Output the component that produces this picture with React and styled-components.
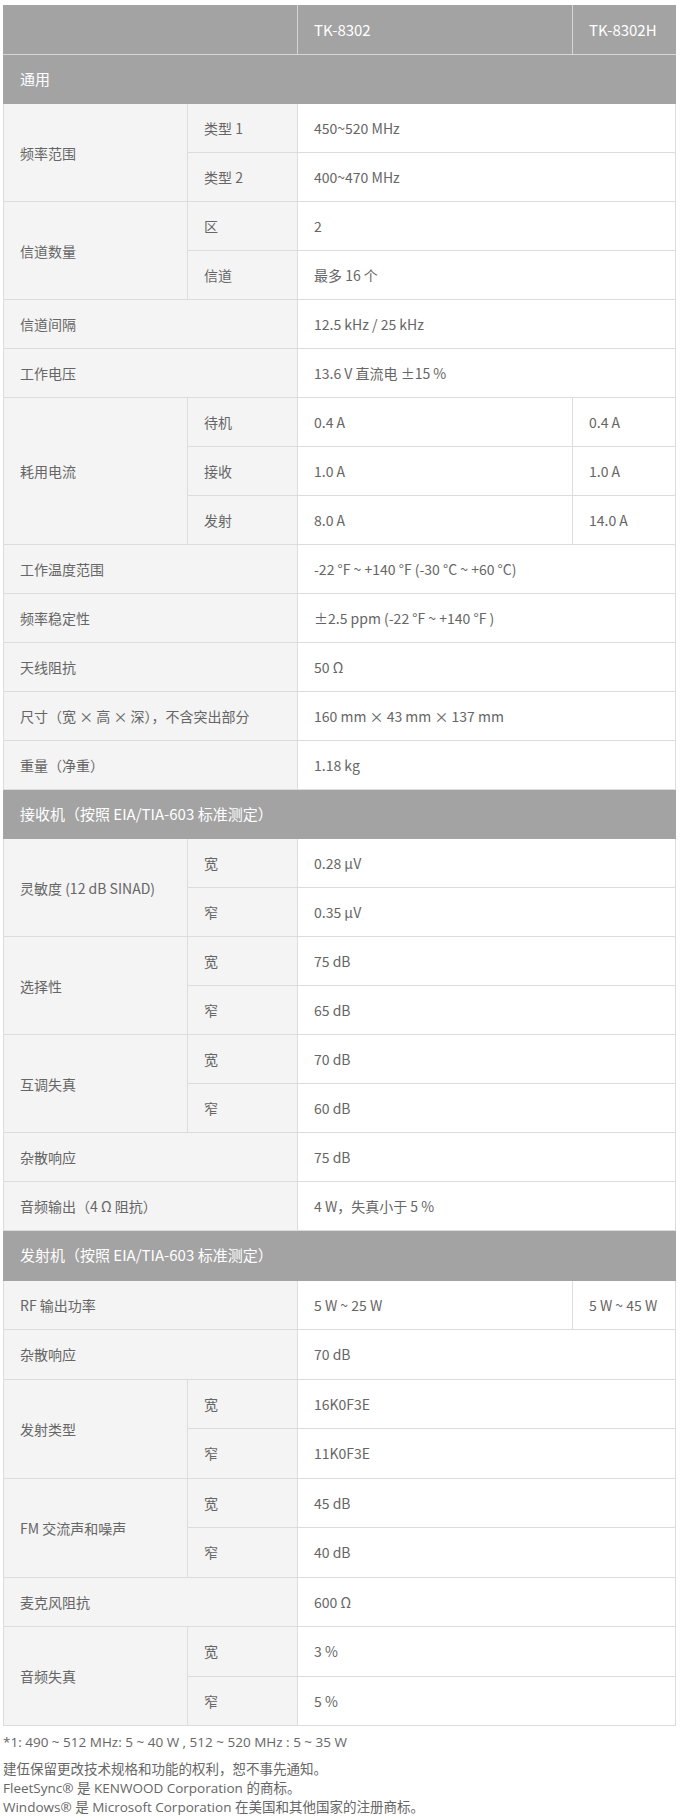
import React from 'react';
import styled, { createGlobalStyle } from 'styled-components';

const GlobalStyle = createGlobalStyle`
    body {
        margin: 0;
        background: #fff;
        font-family: "Noto Sans CJK SC", "Noto Sans", sans-serif;
        color: #666;
    }
`;

const Page = styled.div`
    padding: 5px 0 0 3px;
    width: 672px;
`;

const SpecTable = styled.table`
    width: 672px;
    table-layout: fixed;
    border-collapse: collapse;
    font-size: 14px;
`;

const Cell = styled.td`
    height: ${p => (p.$tall ? '48.5px' : '48px')};
    padding: 0 16px;
    border: 1px solid #dcdcdc;
    vertical-align: middle;
    white-space: nowrap;
    line-height: 20px;
`;

const HeadCell = styled(Cell)`
    background: #a3a3a3;
    color: #fff;
    font-size: 15px;
    font-weight: 400;
    text-align: left;
    border-color: #d6d6d6;
    border-top-color: #a3a3a3;
    border-left-color: ${p => (p.$first ? '#a3a3a3' : '#d6d6d6')};
    border-right-color: ${p => (p.$last ? '#a3a3a3' : '#d6d6d6')};
    border-bottom-color: ${p => (p.$section ? '#a3a3a3' : '#d6d6d6')};
`;

const LabelCell = styled(Cell)`
    background: #f4f4f4;
`;

const ValueCell = styled(Cell)`
    background: #fff;
`;

const Notes = styled.div`
    font-family: "Open Sans", "Noto Sans CJK SC", sans-serif;
    font-size: 13.5px;
    color: #666;
    line-height: 19px;
`;

const Footnote = styled.p`
    margin: 7px 0 8px;
`;

const Legal = styled.p`
    margin: 0;
`;

// rows: [label, subs] where subs = [[sub, v1, v2?]] ; v2 absent = value spans both model columns
const general = [
    ['频率范围', [['类型 1', '450~520 MHz'], ['类型 2', '400~470 MHz']]],
    ['信道数量', [['区', '2'], ['信道', '最多 16 个']]],
    ['信道间隔', [[null, '12.5 kHz / 25 kHz']]],
    ['工作电压', [[null, '13.6 V 直流电 ±15 %']]],
    ['耗用电流', [['待机', '0.4 A', '0.4 A'], ['接收', '1.0 A', '1.0 A'], ['发射', '8.0 A', '14.0 A']]],
    ['工作温度范围', [[null, '-22 °F ~ +140 °F (-30 °C ~ +60 °C)']]],
    ['频率稳定性', [[null, '±2.5 ppm (-22 °F ~ +140 °F )']]],
    ['天线阻抗', [[null, '50 Ω']]],
    ['尺寸（宽 × 高 × 深），不含突出部分', [[null, '160 mm × 43 mm × 137 mm']]],
    ['重量（净重）', [[null, '1.18 kg']]],
];

const receiver = [
    ['灵敏度 (12 dB SINAD)', [['宽', '0.28 µV'], ['窄', '0.35 µV']]],
    ['选择性', [['宽', '75 dB'], ['窄', '65 dB']]],
    ['互调失真', [['宽', '70 dB'], ['窄', '60 dB']]],
    ['杂散响应', [[null, '75 dB']]],
    ['音频输出（4 Ω 阻抗）', [[null, '4 W，失真小于 5 %']]],
];

const transmitter = [
    ['RF 输出功率', [[null, '5 W ~ 25 W', '5 W ~ 45 W']]],
    ['杂散响应', [[null, '70 dB']]],
    ['发射类型', [['宽', '16K0F3E'], ['窄', '11K0F3E']]],
    ['FM 交流声和噪声', [['宽', '45 dB'], ['窄', '40 dB']]],
    ['麦克风阻抗', [[null, '600 Ω']]],
    ['音频失真', [['宽', '3 %'], ['窄', '5 %']]],
];

function SpecRows({ rows, tall }) {
    return rows.flatMap(([label, subs]) =>
        subs.map(([sub, v1, v2], i) => (
            <tr key={label + i}>
                {i === 0 && (
                    <LabelCell rowSpan={subs.length} colSpan={sub ? 1 : 2}>
                        {label}
                    </LabelCell>
                )}
                {sub && <LabelCell>{sub}</LabelCell>}
                <ValueCell $tall={tall} colSpan={v2 ? 1 : 2}>{v1}</ValueCell>
                {v2 && <ValueCell $tall={tall}>{v2}</ValueCell>}
            </tr>
        ))
    );
}

function Section({ title, tall }) {
    return (
        <tr>
            <HeadCell colSpan={4} $first $last $section $tall={tall}>
                {title}
            </HeadCell>
        </tr>
    );
}

export default function App() {
    return (
        <Page>
            <GlobalStyle />
            <SpecTable>
                <colgroup>
                    <col style={{ width: 184 }} />
                    <col style={{ width: 110 }} />
                    <col style={{ width: 275 }} />
                    <col style={{ width: 103 }} />
                </colgroup>
                <tbody>
                    <tr>
                        <HeadCell as="th" colSpan={2} $first />
                        <HeadCell as="th">TK-8302</HeadCell>
                        <HeadCell as="th" $last>TK-8302H</HeadCell>
                    </tr>
                    <Section title="通用" />
                    <SpecRows rows={general} />
                    <Section title="接收机（按照 EIA/TIA-603 标准测定）" />
                    <SpecRows rows={receiver} />
                    <Section title="发射机（按照 EIA/TIA-603 标准测定）" tall />
                    <SpecRows rows={transmitter} tall />
                </tbody>
            </SpecTable>
            <Notes>
                <Footnote>*1: 490 ~ 512 MHz: 5 ~ 40 W , 512 ~ 520 MHz :  5 ~ 35 W</Footnote>
                <Legal>建伍保留更改技术规格和功能的权利，恕不事先通知。</Legal>
                <Legal>FleetSync® 是 KENWOOD Corporation 的商标。</Legal>
                <Legal>Windows® 是 Microsoft Corporation 在美国和其他国家的注册商标。</Legal>
            </Notes>
        </Page>
    );
}
